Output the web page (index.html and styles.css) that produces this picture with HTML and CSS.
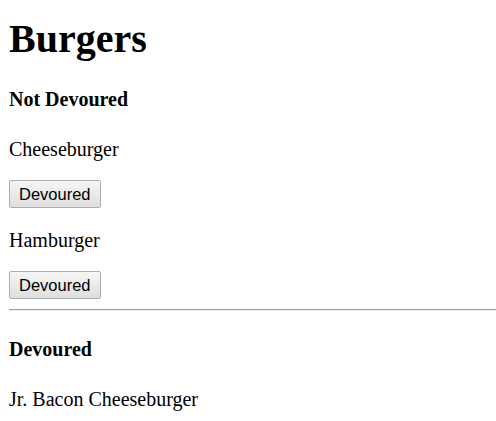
FILE: index.html
```html
<!DOCTYPE html>
<html>
<head>
<meta charset="utf-8">
<title>Burgers</title>
<link rel="stylesheet" href="styles.css">
</head>
<body>
<h1 class="title">Burgers</h1>
<h4 class="section">Not Devoured</h4>
<div class="item">
  <p class="name">Cheeseburger</p>
  <button class="btn">Devoured</button>
</div>
<div class="item">
  <p class="name">Hamburger</p>
  <button class="btn">Devoured</button>
</div>
<hr class="rule">
<h4 class="section">Devoured</h4>
<p class="name">Jr. Bacon Cheeseburger</p>
</body>
</html>
```
FILE: styles.css
```css
html, body {
  margin: 0;
  padding: 0;
  background: #fff;
}
body {
  padding-left: 9px;
  font-family: "Liberation Serif", "Times New Roman", serif;
  font-size: 20px;
  line-height: 23px;
  color: #000;
  overflow: hidden;
}
.title {
  font-size: 40px;
  line-height: 46px;
  font-weight: bold;
  margin: 16px 0 26px;
}
.section {
  font-size: 20px;
  font-weight: bold;
  margin: 0 0 27px;
}
.item {
  margin: 0;
}
.name {
  margin: 0 0 19px;
}
.btn {
  display: block;
  font-family: "Liberation Sans", Arial, sans-serif;
  font-size: 16.5px;
  line-height: 20px;
  height: 28px;
  padding: 0 9px;
  margin: 0 0 21px;
  color: #000;
  border: 1px solid #adadad;
  border-radius: 2px;
  background: linear-gradient(#f6f6f6, #dedede);
}
.rule {
  margin: -11px -8px 27px 0;
  border: none;
  border-top: 1px solid #9a9a9a;
  border-bottom: 1px solid #eeeeee;
  height: 0;
}
```
